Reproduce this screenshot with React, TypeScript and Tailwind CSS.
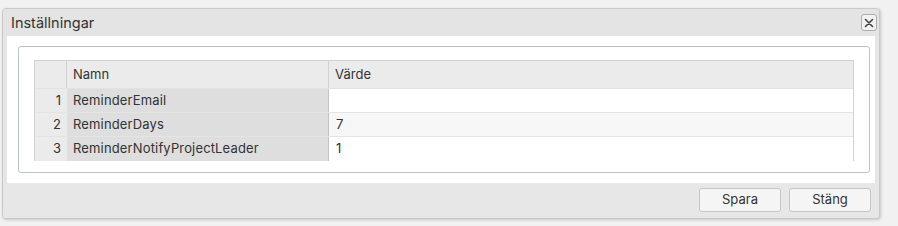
import React from "react";

const rows = [
  { n: 1, name: "ReminderEmail", value: "" },
  { n: 2, name: "ReminderDays", value: "7" },
  { n: 3, name: "ReminderNotifyProjectLeader", value: "1" },
];

export default function App() {
  return (
    <div
      className="w-[898px] h-[226px] bg-[#f1f1f1] pt-[8px] pl-[2px] text-[13px] text-[#333]"
      style={{ fontFamily: "Inter, 'Noto Sans', sans-serif" }}
    >
      <div className="w-[878px] h-[211px] flex flex-col border border-[#c9c9c9] rounded-[4px] bg-[#e6e6e6] shadow-[1px_1px_3px_rgba(0,0,0,0.18)] overflow-hidden">
        <div className="h-[27px] shrink-0 flex items-center justify-between pl-[8px] pr-[2px] bg-[#e4e4e4]">
          <span className="text-[14.5px] text-[#333]">Inställningar</span>
          <button className="w-[16px] h-[17px] flex items-center justify-center border border-[#aeaeae] rounded-[3px] bg-[#f2f2f2]">
            <svg width="10" height="10" viewBox="0 0 10 10">
              <path d="M1.5 1.5 L8.5 8.5 M8.5 1.5 L1.5 8.5" stroke="#444" strokeWidth="1.6" strokeLinecap="round" />
            </svg>
          </button>
        </div>
        <div className="px-[4px]">
          <div className="h-[147px] bg-white pt-[10px] pl-[11px] pr-[5px]">
            <div className="h-[127px] border border-[#b9c3c7] rounded-[3px] pt-[13px] px-[15px]">
              <div className="border-t border-x border-[#d2d2d2]">
                <div className="flex h-[28px] bg-[#ebebeb] border-b border-[#e2e2e2]">
                  <div className="w-[32px] border-r border-[#d2d2d2]" />
                  <div className="w-[262px] border-r border-[#d2d2d2] flex items-center pl-[6px]">Namn</div>
                  <div className="flex-1 flex items-center pl-[6px]">Värde</div>
                </div>
                {rows.map((r, i) => (
                  <div key={r.n} className={`flex h-[24px] ${i < 2 ? "border-b border-[#e4e4e4]" : ""}`}>
                    <div className="w-[32px] bg-[#ebebeb] flex items-center justify-end pr-[6px]">{r.n}</div>
                    <div className="w-[262px] bg-[#dedede] border-r border-[#c4c4c4] flex items-center pl-[6px] tracking-[0.15px]">{r.name}</div>
                    <div className={`flex-1 flex items-center pl-[7px] ${i === 1 ? "bg-[#f7f7f7]" : "bg-white"}`}>{r.value}</div>
                  </div>
                ))}
              </div>
            </div>
          </div>
        </div>
        <div className="flex-1 flex justify-end items-start pt-[5px] pr-[8px] gap-[8px] bg-[#e7e7e7]">
          <button className="w-[82px] h-[24px] border border-[#c6c6c6] rounded-[3px] bg-[#f5f5f5] text-[13px] text-[#333]">Spara</button>
          <button className="w-[82px] h-[24px] border border-[#c6c6c6] rounded-[3px] bg-[#f5f5f5] text-[13px] text-[#333]">Stäng</button>
        </div>
      </div>
    </div>
  );
}
